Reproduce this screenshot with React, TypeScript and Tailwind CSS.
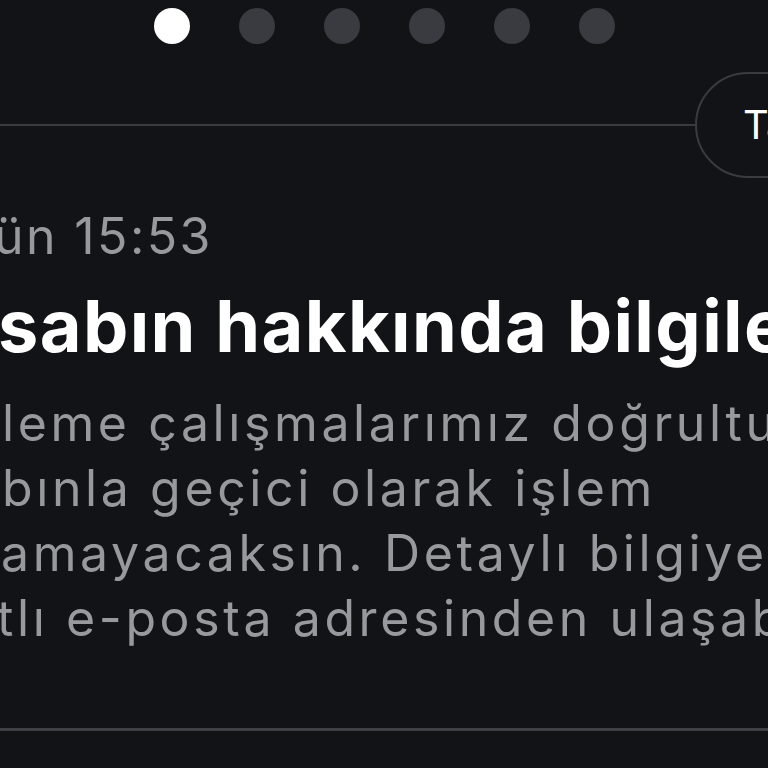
import React from 'react';

const dots = [true, false, false, false, false, false];

const bodyLines = [
  { text: 'leme çalışmalarımız doğrultusunda', offset: 'ml-[2px]' },
  { text: 'bınla geçici olarak işlem', offset: 'ml-[2px]' },
  { text: 'amayacaksın. Detaylı bilgiye kayıtlı', offset: 'ml-[1px]' },
  { text: 'tlı e-posta adresinden ulaşabilirsin.', offset: '-ml-[3px]' },
];

export default function App() {
  return (
    <div
      className="w-[768px] h-[768px] overflow-hidden bg-[#121317] flex flex-col"
      style={{ fontFamily: 'Inter, "Noto Sans", sans-serif' }}
    >
      {/* Pager dots */}
      <div className="flex gap-[49px] ml-[154px] mt-[8px]">
        {dots.map((active, i) => (
          <span
            key={i}
            className={`w-[36px] h-[36px] rounded-full shrink-0 ${active ? 'bg-white' : 'bg-[#3a3b40]'}`}
          />
        ))}
      </div>

      {/* Divider with pill button */}
      <div className="flex items-center mt-[28px]">
        <div className="w-[695px] h-[2px] bg-[#3a3b40] shrink-0" />
        <button className="shrink-0 w-[240px] h-[106px] rounded-full border-2 border-[#3a3b40] flex items-center pl-[46px] text-white text-[40px] leading-none">
          Tamam
        </button>
      </div>

      {/* Date */}
      <div className="mt-[26px] -ml-[6px] whitespace-nowrap text-[50px] leading-[65px] tracking-[2.4px] text-[#98999e]">
        ün 15:53
      </div>

      {/* Title */}
      <h1 className="mt-[17px] -ml-[2px] whitespace-nowrap text-[72px] leading-[80px] tracking-[1.4px] font-bold text-white">
        sabın hakkında bilgilendirme
      </h1>

      {/* Body */}
      <div className="mt-[25px] flex flex-col text-[50px] leading-[65px] tracking-[3.6px] text-[#98999e]">
        {bodyLines.map((l, i) => (
          <div key={i} className={`whitespace-nowrap ${l.offset}`}>
            {l.text}
          </div>
        ))}
      </div>

      <div className="mt-[77px] h-[3px] bg-[#3f4045] shrink-0" />
    </div>
  );
}
